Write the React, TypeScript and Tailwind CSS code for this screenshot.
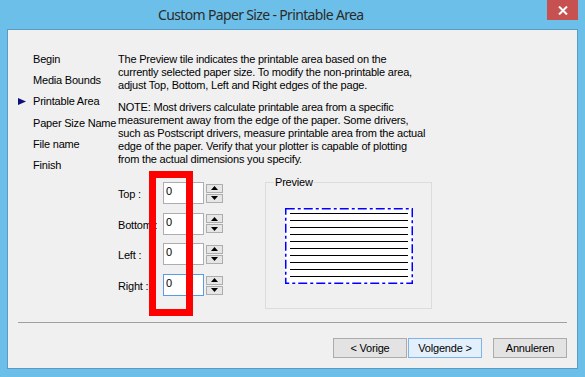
import React from "react";

function SpinArrow({ up }: { up: boolean }) {
  return (
    <svg width="7" height="4" viewBox="0 0 7 4">
      {up ? <path d="M0 4 L3.5 0 L7 4 Z" fill="#000" /> : <path d="M0 0 L3.5 4 L7 0 Z" fill="#000" />}
    </svg>
  );
}

function Paper() {
  const lines = Array.from({ length: 10 }, (_, i) => 5.5 + i * 7);
  return (
    <svg width="128" height="76" viewBox="0 0 128 76">
      <rect x="0" y="0" width="128" height="76" fill="#fff" />
      <rect
        x="0.75"
        y="0.75"
        width="126.5"
        height="74.5"
        fill="none"
        stroke="#0000ff"
        strokeWidth="1.5"
        strokeDasharray="9 3 3 3"
      />
      {lines.map((y) => (
        <line key={y} x1="5" x2="123" y1={y} y2={y} stroke="#000" strokeWidth="1" />
      ))}
    </svg>
  );
}

export default function App() {
  const nav = ["Begin", "Media Bounds", "Printable Area", "Paper Size Name", "File name", "Finish"];
  const fields = ["Top :", "Bottom :", "Left :", "Right :"];
  return (
    <div className="w-[585px] h-[377px] bg-[#6bbfe8] flex flex-col font-['Liberation_Sans',Arial,sans-serif] text-[11px] leading-[13px] text-black overflow-hidden">
      <div className="h-[29px] flex items-start shrink-0">
        <div className="pl-[158px] pt-[5px] text-[14px] leading-[19px] tracking-[-0.65px] text-[#2b2b2b] font-['Noto_Sans',sans-serif] whitespace-nowrap">
          Custom Paper Size - Printable Area
        </div>
        <div className="ml-auto mr-[7px] w-[31px] h-[20px] bg-[#c75050] flex items-center justify-center">
          <svg width="10" height="9" viewBox="0 0 10 9">
            <path d="M1 0.5 L9 8.5 M9 0.5 L1 8.5" stroke="white" strokeWidth="2" />
          </svg>
        </div>
      </div>
      <div className="mx-[7px] h-[340px] shrink-0 border border-[#5a9bc6] bg-[#f0f0f0] flex flex-col relative">
        <div className="h-[292px] flex shrink-0">
          <div className="w-[110px] shrink-0 pt-[19px] pl-[10px] flex flex-col">
            {nav.map((n, i) => (
              <div key={n} className="h-[21.2px] flex items-center whitespace-nowrap">
                <div className="w-[15px] shrink-0 flex items-center">
                  {i === 2 && (
                    <svg width="8" height="7" viewBox="0 0 8 7">
                      <path d="M0 0 L8 3.5 L0 7 Z" fill="#10107a" />
                    </svg>
                  )}
                </div>
                <span className="shrink-0 tracking-[-0.2px]">{n}</span>
              </div>
            ))}
          </div>
          <div className="flex-1 pt-[23px] flex flex-col tracking-[-0.2px]">
            <p className="whitespace-nowrap">
              The Preview tile indicates the printable area based on the
              <br />
              currently selected paper size. To modify the non-printable area,
              <br />
              adjust Top, Bottom, Left and Right edges of the page.
            </p>
            <p className="mt-[9px] whitespace-nowrap">
              NOTE: Most drivers calculate printable area from a specific
              <br />
              measurement away from the edge of the paper. Some drivers,
              <br />
              such as Postscript drivers, measure printable area from the actual
              <br />
              edge of the paper. Verify that your plotter is capable of plotting
              <br />
              from the actual dimensions you specify.
            </p>
            <div className="mt-[16px] flex items-start">
              <div className="flex flex-col gap-[8.7px]">
                {fields.map((f, i) => (
                  <div key={f} className="flex h-[22px] items-center">
                    <div className="w-[45px] pt-[3px] whitespace-nowrap">{f}</div>
                    <div
                      className={
                        i === 3
                          ? "w-[41px] h-[22px] border border-[#569de5] bg-white pl-[2px] pt-[2px]"
                          : "w-[41px] h-[22px] border border-[#abadb3] bg-white pl-[2px] pt-[2px]"
                      }
                    >
                      0
                    </div>
                    <div className="ml-[2px] w-[17px] h-[22px] py-[1.5px] flex flex-col gap-[1px]">
                      <div className="h-[9px] border border-[#adadad] bg-[#e6e6e6] flex items-center justify-center">
                        <SpinArrow up />
                      </div>
                      <div className="h-[9px] border border-[#adadad] bg-[#e6e6e6] flex items-center justify-center">
                        <SpinArrow up={false} />
                      </div>
                    </div>
                  </div>
                ))}
              </div>
              <div className="ml-[42px] w-[167px] h-[127px] border border-[#dcdcdc] relative pl-[19px] pt-[25px]">
                <div className="absolute left-[8px] top-[-7px] px-[1px] bg-[#f0f0f0] text-[11px] leading-[13px]">
                  Preview
                </div>
                <Paper />
              </div>
            </div>
          </div>
        </div>
        <div className="mx-[10px] h-px bg-[#a0a0a0] shrink-0" />
        <div className="mt-[15px] flex justify-end pr-[10px]">
          <button className="w-[74px] h-[20px] border border-[#acacac] bg-[#e3e3e3] text-[11px] leading-[13px] tracking-[-0.2px] font-['Liberation_Sans',Arial,sans-serif]">
            &lt; Vorige
          </button>
          <button className="ml-[1px] w-[74px] h-[20px] border border-[#7eb4ea] bg-[#e3effb] text-[11px] leading-[13px] tracking-[-0.2px] font-['Liberation_Sans',Arial,sans-serif]">
            Volgende &gt;
          </button>
          <button className="ml-[11px] w-[74px] h-[20px] border border-[#acacac] bg-[#e3e3e3] text-[11px] leading-[13px] tracking-[-0.2px] font-['Liberation_Sans',Arial,sans-serif]">
            Annuleren
          </button>
        </div>
        <div className="absolute left-[141px] top-[141px] w-[44px] h-[145px] border-[7px] border-[#ff0000] pointer-events-none" />
      </div>
    </div>
  );
}
